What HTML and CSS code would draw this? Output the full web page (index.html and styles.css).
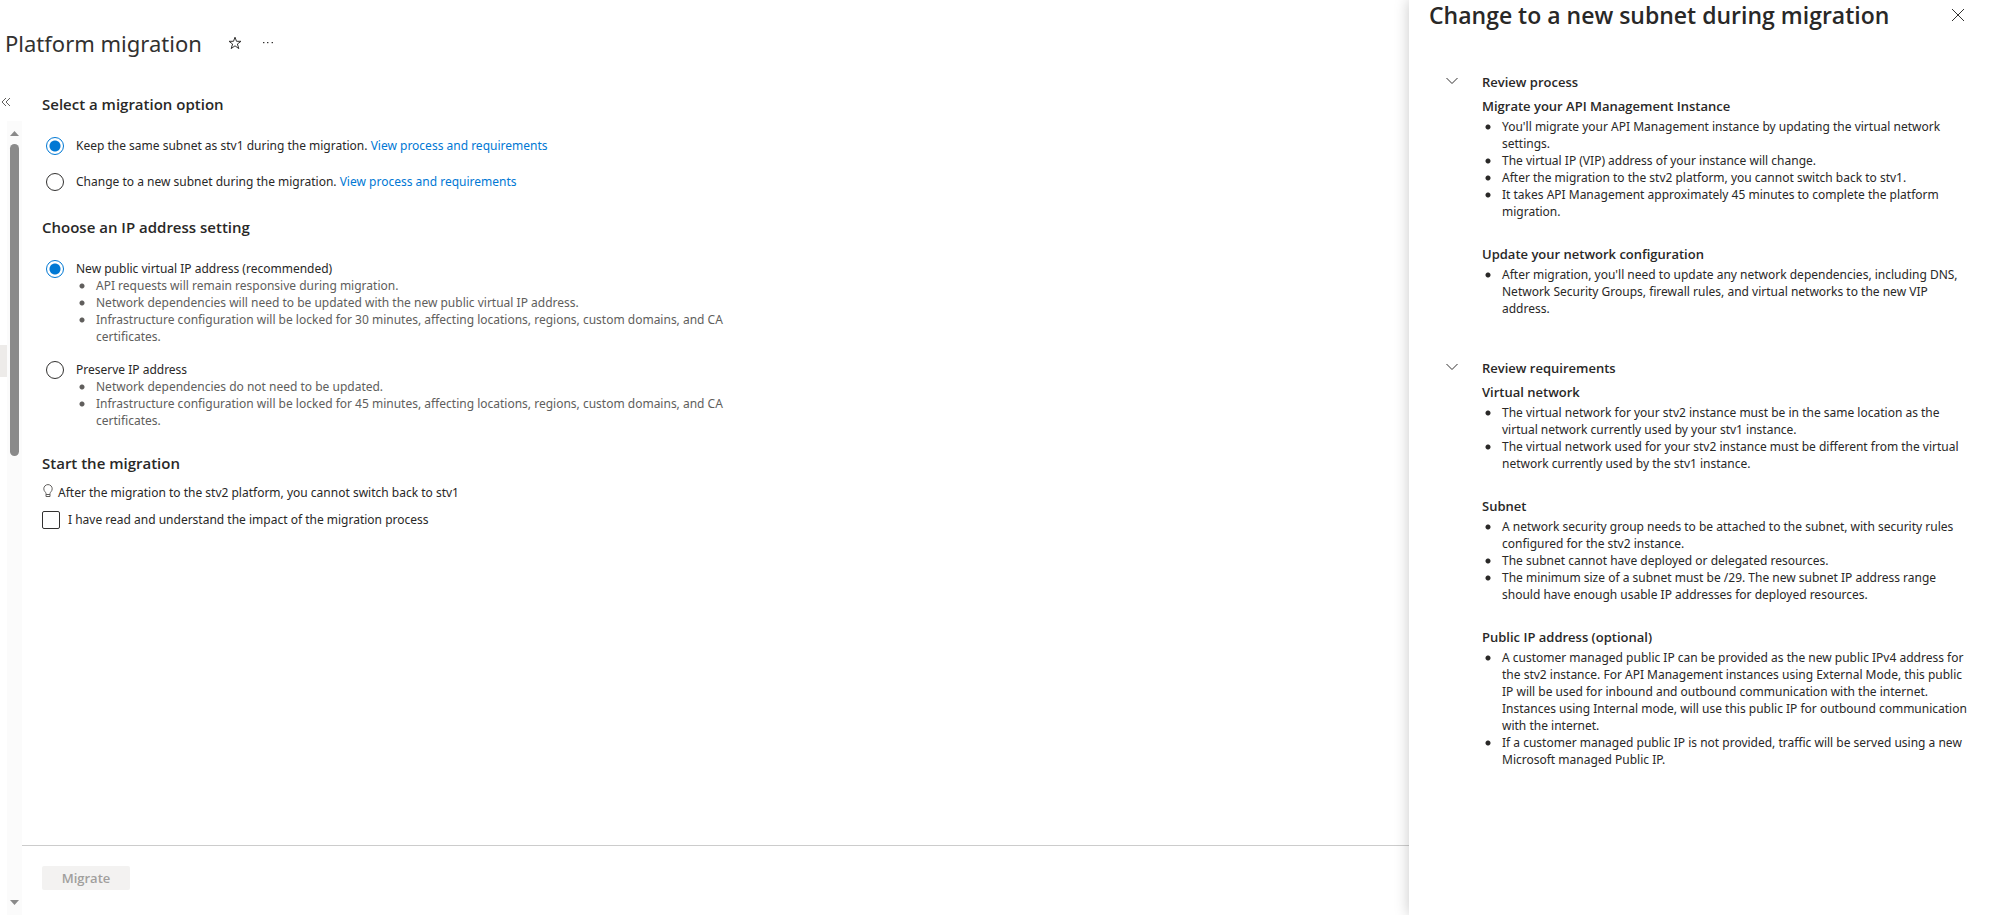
FILE: index.html
```html
<!DOCTYPE html>
<html lang="en">
<head>
    <meta charset="utf-8">
    <title>Platform migration</title>
    <link rel="stylesheet" href="styles.css">
</head>
<body>
    <div class="blade">
        <header class="blade-header">
            <h1>Platform migration</h1>
            <button type="button" class="icon-button" aria-label="Favorite">
                <svg width="14" height="14" viewBox="0 0 14 14" fill="none" stroke="#323130" stroke-linejoin="miter">
                    <path d="M7 1.2 L8.5 5.3 H13 L9.4 8 L10.8 12.6 L7 9.8 L3.2 12.6 L4.6 8 L1 5.3 H5.5 Z"/>
                </svg>
            </button>
            <button type="button" class="icon-button" aria-label="More">
                <svg width="12" height="4" viewBox="0 0 12 4" fill="#323130">
                    <rect x="1" y="1" width="1.4" height="1.2"/>
                    <rect x="5" y="1" width="1.4" height="1.2"/>
                    <rect x="9.6" y="1" width="1.4" height="1.2"/>
                </svg>
            </button>
        </header>

        <div class="blade-body">
            <div class="menu">
                <button type="button" class="collapse" aria-label="Collapse menu">
                    <svg width="10" height="10" viewBox="0 0 10 10" fill="none" stroke="#605e5c">
                        <path d="M5 1 L1 5 L5 9 M9 1 L5 5 L9 9"/>
                    </svg>
                </button>
                <div class="menu-scroll">
                    <div class="menu-items">
                        <div class="menu-selected"></div>
                    </div>
                    <div class="scrollbar">
                        <svg width="9" height="5" viewBox="0 0 9 5" fill="#8a8a8a"><path d="M0 5 L4.5 0 L9 5 Z"/></svg>
                        <div class="track"><div class="thumb"></div></div>
                        <svg width="9" height="5" viewBox="0 0 9 5" fill="#8a8a8a"><path d="M0 0 L4.5 5 L9 0 Z"/></svg>
                    </div>
                </div>
            </div>

            <form class="content">
                <div class="fields">
                    <h2>Select a migration option</h2>
                    <div class="option">
                        <input type="radio" id="same" name="subnet" checked>
                        <div>
                            <label for="same">Keep the same subnet as stv1 during the migration.</label>
                            <a href="#process">View process and requirements</a>
                        </div>
                    </div>
                    <div class="option">
                        <input type="radio" id="new" name="subnet">
                        <div>
                            <label for="new">Change to a new subnet during the migration.</label>
                            <a href="#process">View process and requirements</a>
                        </div>
                    </div>

                    <h2>Choose an IP address setting</h2>
                    <div class="option">
                        <input type="radio" id="public" name="ip" checked>
                        <div>
                            <label for="public">New public virtual IP address (recommended)</label>
                            <ul>
                                <li>API requests will remain responsive during migration.</li>
                                <li>Network dependencies will need to be updated with the new public virtual IP address.</li>
                                <li>Infrastructure configuration will be locked for 30 minutes, affecting locations, regions, custom domains, and CA certificates.</li>
                            </ul>
                        </div>
                    </div>
                    <div class="option">
                        <input type="radio" id="preserve" name="ip">
                        <div>
                            <label for="preserve">Preserve IP address</label>
                            <ul>
                                <li>Network dependencies do not need to be updated.</li>
                                <li>Infrastructure configuration will be locked for 45 minutes, affecting locations, regions, custom domains, and CA certificates.</li>
                            </ul>
                        </div>
                    </div>

                    <h2 class="start">Start the migration</h2>
                    <p class="hint">
                        <svg width="12" height="14" viewBox="0 0 12 14" fill="none" stroke="#605e5c">
                            <path d="M4 10.5 V9.5 C4 8.2 1.8 7.3 1.8 4.8 A4.2 4.2 0 0 1 10.2 4.8 C10.2 7.3 8 8.2 8 9.5 V10.5 M4 10.5 H8 V12.5 H4 Z"/>
                        </svg>
                        <span>After the migration to the stv2 platform, you cannot switch back to stv1</span>
                    </p>
                    <div class="confirm">
                        <input type="checkbox" id="confirm">
                        <label for="confirm">I have read and understand the impact of the migration process</label>
                    </div>
                </div>
                <div class="footer">
                    <button type="submit" class="migrate" disabled>Migrate</button>
                </div>
            </form>
        </div>
    </div>

    <aside class="panel">
        <div class="panel-header">
            <h1>Change to a new subnet during migration</h1>
            <button type="button" class="icon-button" aria-label="Close">
                <svg width="14" height="14" viewBox="0 0 14 14" fill="none" stroke="#323130">
                    <path d="M1 1 L13 13 M13 1 L1 13"/>
                </svg>
            </button>
        </div>

        <section class="review" id="process">
            <button type="button" class="chevron" aria-label="Collapse">
                <svg width="12" height="8" viewBox="0 0 12 8" fill="none" stroke="#323130"><path d="M0.5 1 L6 6.5 L11.5 1"/></svg>
            </button>
            <div>
                <h2>Review process</h2>
                <h3>Migrate your API Management Instance</h3>
                <ul>
                    <li>You'll migrate your API Management instance by updating the virtual network settings.</li>
                    <li>The virtual IP (VIP) address of your instance will change.</li>
                    <li>After the migration to the stv2 platform, you cannot switch back to stv1.</li>
                    <li>It takes API Management approximately 45 minutes to complete the platform migration.</li>
                </ul>
                <h3>Update your network configuration</h3>
                <ul>
                    <li>After migration, you'll need to update any network dependencies, including DNS, Network Security Groups, firewall rules, and virtual networks to the new VIP address.</li>
                </ul>
            </div>
        </section>

        <section class="review">
            <button type="button" class="chevron" aria-label="Collapse">
                <svg width="12" height="8" viewBox="0 0 12 8" fill="none" stroke="#323130"><path d="M0.5 1 L6 6.5 L11.5 1"/></svg>
            </button>
            <div>
                <h2>Review requirements</h2>
                <h3>Virtual network</h3>
                <ul>
                    <li>The virtual network for your stv2 instance must be in the same location as the virtual network currently used by your stv1 instance.</li>
                    <li>The virtual network used for your stv2 instance must be different from the virtual network currently used by the stv1 instance.</li>
                </ul>
                <h3>Subnet</h3>
                <ul>
                    <li>A network security group needs to be attached to the subnet, with security rules configured for the stv2 instance.</li>
                    <li>The subnet cannot have deployed or delegated resources.</li>
                    <li>The minimum size of a subnet must be /29. The new subnet IP address range should have enough usable IP addresses for deployed resources.</li>
                </ul>
                <h3>Public IP address (optional)</h3>
                <ul>
                    <li>A customer managed public IP can be provided as the new public IPv4 address for the stv2 instance. For API Management instances using External Mode, this public IP will be used for inbound and outbound communication with the internet. Instances using Internal mode, will use this public IP for outbound communication with the internet.</li>
                    <li>If a customer managed public IP is not provided, traffic will be served using a new Microsoft managed Public IP.</li>
                </ul>
            </div>
        </section>
    </aside>
</body>
</html>
```
FILE: styles.css
```css
* {
    box-sizing: border-box;
}

body {
    margin: 0;
    display: flex;
    min-height: 100vh;
    font-family: "Noto Sans", "Open Sans", sans-serif;
    font-size: 12px;
    line-height: 17px;
    color: #292827;
    background-color: #fff;
}

h1, h2, h3, p, ul {
    margin: 0;
}

h1, h2, h3 {
    font-family: "Open Sans", "Noto Sans", sans-serif;
    font-weight: 600;
}

ul {
    padding: 0;
    list-style: none;
}

/* round bullet, larger than the default marker */
li {
    padding-left: 20px;
    background: radial-gradient(circle, currentColor 2px, transparent 3px) 3px 6px / 6px 6px no-repeat;
}

a {
    color: #0078d4;
    text-decoration: none;
}

svg {
    display: block;
}

button {
    padding: 0;
    border: none;
    background: none;
    font-family: inherit;
    cursor: pointer;
}

/* main blade */
.blade {
    flex: 1;
    display: flex;
    flex-direction: column;
}

.blade-header {
    display: flex;
    align-items: center;
    gap: 20px;
    height: 86px;
    padding-left: 5px;
}

.blade-header h1 {
    margin-right: 6px;
    font-family: inherit;
    font-size: 22px;
    font-weight: 400;
    line-height: 32px;
    color: #323130;
}

.blade-body {
    flex: 1;
    display: flex;
}

.menu {
    width: 22px;
    display: flex;
    flex-direction: column;
}

.collapse {
    height: 35px;
    padding: 0 0 4px 1px;
}

.menu-scroll {
    flex: 1;
    display: flex;
}

.menu-items {
    width: 7px;
    padding-top: 224px;
}

.menu-selected {
    height: 32px;
    background-color: #edebe9;
}

.scrollbar {
    width: 15px;
    display: flex;
    flex-direction: column;
    align-items: center;
    padding: 10px 0;
    background-color: #fbfbfb;
}

.track {
    flex: 1;
    padding: 8px 0;
}

.thumb {
    width: 9px;
    height: 312px;
    border-radius: 5px;
    background-color: #8a8a8a;
}

.content {
    flex: 1;
    display: flex;
    flex-direction: column;
}

.fields {
    flex: 1;
    max-width: 730px;
    padding: 8px 0 0 20px;
}

.fields h2 {
    margin-bottom: 22px;
    font-size: 15px;
    line-height: 21px;
}

.fields h2.start {
    margin-bottom: 10px;
}

.option {
    display: flex;
    gap: 12px;
    min-height: 20px;
    margin-bottom: 16px;
    padding-left: 4px;
}

.option + h2 {
    padding-top: 8px;
}

input[type="radio"],
input[type="checkbox"] {
    appearance: none;
    flex: none;
    width: 18px;
    height: 18px;
    margin: 0;
    border: 1px solid #323130;
    border-radius: 2px;
}

input[type="radio"] {
    border-radius: 50%;
}

input[type="radio"]:checked {
    border-color: #0078d4;
    background: radial-gradient(circle, #0078d4 5px, #fff 6px);
}

.option ul {
    color: #605e5c;
}

.hint {
    display: flex;
    gap: 4px;
    margin-bottom: 10px;
}

.confirm {
    display: flex;
    gap: 8px;
}

.footer {
    height: 70px;
    padding: 20px;
    border-top: 1px solid #ccc;
}

.migrate {
    width: 88px;
    height: 24px;
    border-radius: 2px;
    background-color: #f3f2f1;
    color: #a19f9d;
    font-family: "Open Sans", "Noto Sans", sans-serif;
    font-size: 13px;
    font-weight: 600;
}

/* context panel */
.panel {
    flex: 0 0 584px;
    padding: 0 20px 16px;
    background-color: #fff;
    box-shadow: 0 0 14px rgba(0, 0, 0, 0.22);
}

.panel-header {
    display: flex;
    justify-content: space-between;
    align-items: center;
    height: 30px;
    padding-right: 8px;
    margin-bottom: 44px;
}

.panel-header h1 {
    font-size: 23px;
    line-height: 30px;
}

.review {
    display: flex;
    gap: 24px;
    margin-bottom: 43px;
    padding-left: 17px;
}

.chevron {
    align-self: flex-start;
    padding-top: 3px;
}

.review h2 {
    margin-bottom: 7px;
    font-size: 13px;
}

.review h3 {
    margin-bottom: 3px;
    font-size: 13px;
}

.review ul + h3 {
    margin-top: 26px;
}
```
